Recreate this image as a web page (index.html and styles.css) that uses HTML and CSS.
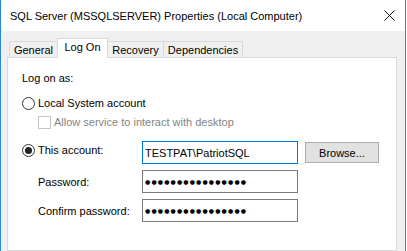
FILE: index.html
```html
<!DOCTYPE html>
<html lang="en">
<head>
  <meta charset="UTF-8">
  <title>SQL Server (MSSQLSERVER) Properties (Local Computer)</title>
  <link rel="stylesheet" href="styles.css">
</head>
<body>
  <div class="window">
    <div class="titlebar">
      <span class="title">SQL Server (MSSQLSERVER) Properties (Local Computer)</span>
      <svg class="close" width="11" height="11" viewBox="0 0 11 11">
        <path d="M0.5 0.5 L10.5 10.5 M10.5 0.5 L0.5 10.5" stroke="#111" stroke-width="1" fill="none"/>
      </svg>
    </div>

    <div class="tabs">
      <div class="tab tab-general">General</div>
      <div class="tab tab-logon active">Log On</div>
      <div class="tab tab-recovery">Recovery</div>
      <div class="tab tab-deps">Dependencies</div>
    </div>

    <div class="panel">
      <div class="row caption">Log on as:</div>

      <label class="row option opt-local"><span class="radio"></span>Local System account</label>
      <label class="row option opt-interact disabled"><span class="check"></span>Allow service to interact with desktop</label>

      <div class="row field field-account">
        <label class="field-label option"><span class="radio checked"></span>This account:</label>
        <div class="textbox focused">TESTPAT\PatriotSQL</div>
        <button class="btn">Browse...</button>
      </div>

      <div class="row field">
        <label class="field-label indent">Password:</label>
        <div class="textbox"><span class="dots">●●●●●●●●●●●●●●●●</span></div>
      </div>

      <div class="row field">
        <label class="field-label indent">Confirm password:</label>
        <div class="textbox"><span class="dots">●●●●●●●●●●●●●●●●</span></div>
      </div>
    </div>
  </div>
</body>
</html>
```

FILE: styles.css
```css
body {
  margin: 0;
  background-color: #ffffff;
  font-family: "Liberation Sans", Arial, sans-serif;
  font-size: 11px;
  color: #000;
}

.window {
  width: 404px;
  height: 251px;
  border-left: 1px solid #2b88d8;
  border-right: 1px solid #2b88d8;
  background-color: #f0f0f0;
  display: flex;
  flex-direction: column;
  overflow: hidden;
}

.titlebar {
  height: 31px;
  flex-shrink: 0;
  background-color: #ffffff;
  display: flex;
  align-items: center;
  padding-left: 9px;
}

.title {
  font-size: 11px;
  color: #000;
}

.close {
  margin-left: auto;
  margin-right: 10px;
}

/* tab strip */
.tabs {
  display: flex;
  align-items: flex-end;
  height: 20px;
  margin-top: 7px;
  margin-bottom: -1px;
  padding-left: 8px;
  position: relative;
  z-index: 1;
}

.tab {
  box-sizing: border-box;
  height: 16px;
  margin-bottom: 1px;
  margin-left: -1px;
  border: 1px solid #d9d9d9;
  border-bottom: none;
  background-color: #f0f0f0;
  display: flex;
  align-items: center;
  justify-content: center;
}

.tab-general { width: 49px; margin-left: 0; }
.tab-logon { width: 51px; }
.tab-recovery { width: 57px; }
.tab-deps { width: 80px; }

.tab.active {
  height: 20px;
  margin-bottom: 0;
  background-color: #ffffff;
  position: relative;
  z-index: 2;
  padding-bottom: 3px;
}

.panel {
  box-sizing: border-box;
  width: 390px;
  margin-left: 6px;
  flex: 1;
  border: 1px solid #d9d9d9;
  background-color: #ffffff;
  padding-left: 14px;
}

.row {
  display: flex;
  align-items: center;
}

.caption {
  height: 14px;
  margin-top: 13px;
}

.option {
  height: 14px;
}

.opt-local {
  margin-top: 11px;
}

.opt-interact {
  margin-top: 5px;
  padding-left: 16px;
}

.disabled {
  color: #838383;
}

.radio {
  box-sizing: border-box;
  width: 13px;
  height: 13px;
  margin-right: 3px;
  border: 1px solid #333;
  border-radius: 50%;
  background-color: #fff;
  display: flex;
  align-items: center;
  justify-content: center;
}

.radio.checked::after {
  content: "";
  width: 7px;
  height: 7px;
  border-radius: 50%;
  background-color: #222;
}

.check {
  box-sizing: border-box;
  width: 13px;
  height: 13px;
  margin-right: 3px;
  border: 1px solid #c4c4c4;
  background-color: #fff;
}

.field {
  align-items: flex-start;
  margin-top: 6px;
}

.field-account {
  margin-top: 12px;
}

.field-label {
  box-sizing: border-box;
  width: 120px;
  height: 18px;
  display: flex;
  align-items: center;
}

.field-label.indent {
  height: 23px;
  padding-left: 16px;
}

.textbox {
  box-sizing: border-box;
  width: 156px;
  height: 23px;
  border: 1px solid #7a7a7a;
  background-color: #fff;
  padding-left: 2px;
  display: flex;
  align-items: center;
}

.textbox.focused {
  border-color: #0078d7;
}

.dots {
  font-family: "DejaVu Sans", sans-serif;
  font-size: 6px;
  letter-spacing: 1.15px;
}

.btn {
  box-sizing: border-box;
  width: 74px;
  height: 21px;
  margin-left: 7px;
  margin-top: 1px;
  padding: 0;
  border: 1px solid #adadad;
  background-color: #e1e1e1;
  font-family: "Liberation Sans", Arial, sans-serif;
  font-size: 11px;
  color: #000;
}
```
